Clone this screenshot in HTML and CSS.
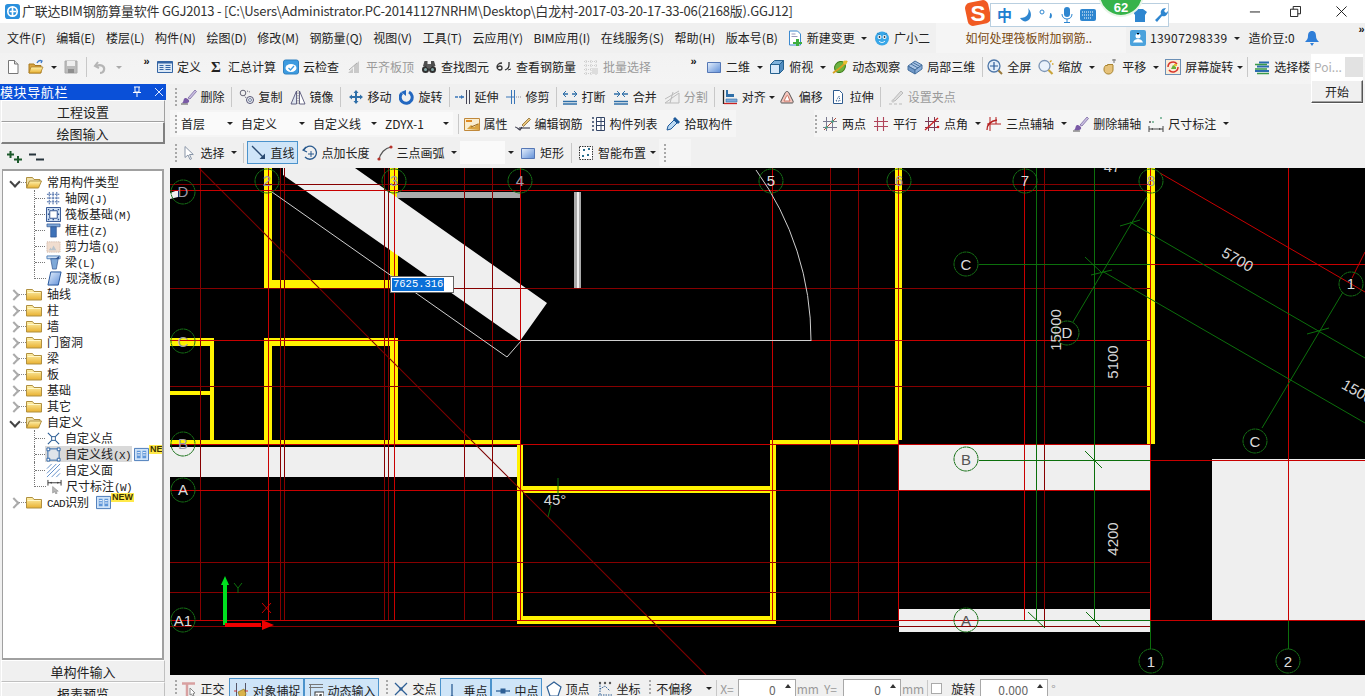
FILE: index.html
```html
<!DOCTYPE html>
<html lang="zh-CN">
<head>
<meta charset="utf-8">
<title>广联达BIM钢筋算量软件 GGJ2013</title>
<link rel="stylesheet" href="styles.css">
</head>
<body>
<svg class="sprite" aria-hidden="true">
<defs>
<linearGradient id="gy" x1="0" y1="0" x2="0" y2="1"><stop offset="0" stop-color="#fff3b0"/><stop offset="1" stop-color="#e8b030"/></linearGradient>
<linearGradient id="gb" x1="0" y1="0" x2="1" y2="1"><stop offset="0" stop-color="#e6f0fc"/><stop offset="1" stop-color="#5f8fd8"/></linearGradient>
<symbol id="new" viewBox="0 0 16 16"><path d="M3.5 1.5h6l3.500 3.500v9.500h-9.500z" fill="#fff" stroke="#777"/><path d="M9.500 1.500v3.500h3.500" fill="#ddd" stroke="#777"/></symbol>
<symbol id="open" viewBox="0 0 16 16"><path d="M1 5h5l1 1.500h6V14H1z" fill="#d9a441" stroke="#a87a20"/><path d="M3 8h12l-2.500 6H1z" fill="url(#gy)" stroke="#a87a20" stroke-width=".7"/><path d="M9 4c1-2 3-3 5-2l-1 2" fill="none" stroke="#3a78c8" stroke-width="1.300"/></symbol>
<symbol id="save" viewBox="0 0 16 16"><path d="M2 2h12v12H2z" fill="#bbb" stroke="#aaa"/><path d="M4 2h8v5H4z" fill="#eee"/><path d="M5 10h6v4H5z" fill="#8f8f8f"/></symbol>
<symbol id="undo" viewBox="0 0 16 16"><path d="M5 3L2 7l4 2" fill="none" stroke="#b5b5b5" stroke-width="2"/><path d="M3 7c5-2 9 0 8 4-.5 2-2 3-4 3" fill="none" stroke="#b5b5b5" stroke-width="2.200"/></symbol>
<symbol id="def" viewBox="0 0 16 16"><path d="M.5 2.500h15v11H.5z" fill="#dbe8f6" stroke="#3465a4"/><path d="M.5 2.500h15v2H.5z" fill="#3465a4"/><path d="M2.500 6.500h4M2.500 8.500h4M2.500 10.500h4M8.500 6.500h5M8.500 8.500h5M8.500 10.500h5" stroke="#3465a4"/></symbol>
<symbol id="cloud" viewBox="0 0 16 16"><rect x=".5" y="1" width="15" height="14" rx="2" fill="#3d9be0" stroke="#2f80c0"/><ellipse cx="8" cy="9" rx="5.500" ry="4" fill="#fff"/><path d="M5.500 9l2 2 3.500-4" fill="none" stroke="#3d9be0" stroke-width="1.300"/></symbol>
<symbol id="flat" viewBox="0 0 16 16"><path d="M2 14l5-5v5zM8 14V7l5-5v12z" fill="#c9c9c9"/><path d="M3 11l8-7" stroke="#aaa"/></symbol>
<symbol id="find" viewBox="0 0 16 16"><path d="M2 7l1.500-5h3v5zM10 7V2h3l1.500 5z" fill="#4d4d4d"/><circle cx="4.500" cy="10.500" r="3.500" fill="#2f2f2f"/><circle cx="11.500" cy="10.500" r="3.500" fill="#2f2f2f"/><circle cx="4.500" cy="10.500" r="1.500" fill="#8aa"/><circle cx="11.500" cy="10.500" r="1.500" fill="#8aa"/><path d="M6 5h4v4H6z" fill="#5a5a5a"/></symbol>
<symbol id="rebar" viewBox="0 0 16 16"><path d="M6 4c-3 0-5 2-5 4s2 3 3 3 2-1 2-2-1-2-2-2-2 .5-2.500 1.500M9 11l2-1c1-.5 2-2 2-4V3" fill="none" stroke="#333" stroke-width="1.300"/><path d="M12 11l3-1" stroke="#333"/></symbol>
<symbol id="batch" viewBox="0 0 16 16"><path d="M1 2.500h14M1 6.500h14M1 10.500h14M1 14.500h14M3 1v15M8 1v15M13 1v15" stroke="#ccc" stroke-dasharray="1 1"/><path d="M9 9h6v6H9z" fill="#ddd"/></symbol>
<symbol id="rect" viewBox="0 0 16 16"><path d="M1.500 3.500h13v10h-13z" fill="url(#gb)" stroke="#5577b5"/></symbol>
<symbol id="cube" viewBox="0 0 16 16"><path d="M1.500 5.500h9v9h-9z" fill="#d8e8f8" stroke="#25608e"/><path d="M1.500 5.500l4-4h9l-4 4z" fill="#7fb2dc" stroke="#25608e"/><path d="M10.500 5.500l4-4v9l-4 4z" fill="#4e8bc0" stroke="#25608e"/></symbol>
<symbol id="orbit" viewBox="0 0 16 16"><ellipse cx="8" cy="8" rx="5" ry="6" transform="rotate(40 8 8)" fill="#6cb33f" stroke="#3c7a1a"/><path d="M1 14C4 12 12 6 15 2" stroke="#d9a020" stroke-width="2" fill="none"/><circle cx="13" cy="3.500" r="2" fill="#e8c030"/></symbol>
<symbol id="loc3" viewBox="0 0 16 16"><path d="M1 7l7-5 7 4-7 5z" fill="#a9c4e4" stroke="#46709e"/><path d="M1 7v4l7 4v-4z" fill="#6f97c7" stroke="#46709e"/><path d="M8 11v4l7-5V6z" fill="#8db0da" stroke="#46709e"/><path d="M4 5l7 4M6 3.500l7 4" stroke="#46709e"/></symbol>
<symbol id="full" viewBox="0 0 16 16"><circle cx="7" cy="7" r="6" fill="#e4eef9" stroke="#4d76a8" stroke-width="1.300"/><path d="M7 3v8M3 7h8" stroke="#2c5c9a" stroke-width="1.200"/><path d="M11.500 11.500l3.500 3.500" stroke="#9a7a3d" stroke-width="2"/></symbol>
<symbol id="zoom" viewBox="0 0 16 16"><circle cx="6.500" cy="7" r="5.500" fill="#eaf2fb" stroke="#7c95b5" stroke-width="1.300"/><path d="M10.500 11l4 4" stroke="#c9a43a" stroke-width="2.200"/><path d="M12 3l1.500-1.500M14 5h1.500" stroke="#d4a520" stroke-width="1.300"/></symbol>
<symbol id="pan" viewBox="0 0 16 16"><path d="M2 10c0-2 1-3 2-4l1 1 1-2 1 1 1-1 1 1 1-1 1 1v5c0 2-2 4-4 4H6c-2 0-4-2-4-4z" fill="#e6c27a" stroke="#a8842f"/><path d="M10 1h4M12 0v4M11 2.500" stroke="#777"/></symbol>
<symbol id="srot" viewBox="0 0 16 16"><rect x=".5" y=".5" width="15" height="15" fill="#f9ecd8" stroke="#6b8fb5"/><path d="M3 8a5 5 0 0 1 9-3M13 8a5 5 0 0 1-9 3" fill="none" stroke="#d9352a" stroke-width="1.500"/><path d="M6 10l2-4 3 2v2z" fill="#68b038"/><path d="M9 5h3v2H9z" fill="#e8c030"/></symbol>
<symbol id="floor" viewBox="0 0 16 16"><path d="M5 3.500h10M3 7.500h12M1 12h14" stroke="#2b6cb0" stroke-width="1.800"/><path d="M1 5.500h12M1 10h12M3 14.500h12" stroke="#3a9a4a" stroke-width="1.300"/></symbol>
<symbol id="brush" viewBox="0 0 16 16"><path d="M7 9l7-8 1.500 1.500L9 10z" fill="#c9bfe0" stroke="#6e5a9a" stroke-width=".7"/><path d="M4 9c2 0 5 2 4 4-1 1.500-5 1.500-7 1 2-1 1-4 3-5z" fill="#7a5aa6"/><path d="M0 15h7" stroke="#555"/></symbol>
<symbol id="copy" viewBox="0 0 16 16"><circle cx="4" cy="4" r="2.800" fill="none" stroke="#667"/><circle cx="11" cy="11" r="3.500" fill="none" stroke="#557"/><circle cx="11" cy="11" r="1.500" fill="none" stroke="#78a"/><path d="M8 2l3 1M7 9l-2-3" stroke="#667" stroke-dasharray="1 1"/></symbol>
<symbol id="mirror" viewBox="0 0 16 16"><path d="M6.500 2v13H1z" fill="#dfe6ef" stroke="#557" stroke-width=".9"/><path d="M9.500 2v13H15z" fill="#fff" stroke="#557" stroke-width=".9"/><path d="M8 1v15" stroke="#888" stroke-dasharray="1.500 1"/></symbol>
<symbol id="move" viewBox="0 0 16 16"><path d="M8 1l2.500 3H9v3h3V5.500L15 8l-3 2.500V9H9v3h1.500L8 15l-2.500-3H7V9H4v1.500L1 8l3-2.500V7h3V4H5.500z" fill="#2f6fa8"/></symbol>
<symbol id="rot" viewBox="0 0 16 16"><path d="M3 4a6 6 0 1 0 7-1" fill="none" stroke="#2267c0" stroke-width="3"/><path d="M7 1v6L2 3z" fill="#2267c0"/></symbol>
<symbol id="ext" viewBox="0 0 16 16"><path d="M0 8h9" stroke="#3a76b8" stroke-width="1.300" stroke-dasharray="3 1"/><path d="M11.500 1v14M14.500 1v14" stroke="#445" /><path d="M6 6l3 2-3 2" fill="#3a76b8"/></symbol>
<symbol id="trim" viewBox="0 0 16 16"><path d="M5.500 1v14M8.500 1v14" stroke="#3a76b8" /><path d="M0 8h8" stroke="#3a76b8"/><path d="M10 8h6" stroke="#889" stroke-dasharray="1 1"/></symbol>
<symbol id="brk" viewBox="0 0 16 16"><path d="M1 12.500h14M1 15h14" stroke="#2f6fa8" stroke-width="1.300"/><path d="M1 5h5M10 5h5" stroke="#2f6fa8" stroke-width="1.300"/><path d="M4 2L1 5l3 3M12 2l3 3-3 3" fill="none" stroke="#2f6fa8"/></symbol>
<symbol id="mrg" viewBox="0 0 16 16"><path d="M1 12.500h14M1 15h14" stroke="#2f6fa8" stroke-width="1.300"/><path d="M1 5h5M10 5h5" stroke="#2f6fa8" stroke-width="1.300"/><path d="M4 2l3 3-3 3M12 2L9 5l3 3" fill="none" stroke="#2f6fa8"/></symbol>
<symbol id="split" viewBox="0 0 16 16"><path d="M1 14h14V4z" fill="#eee" stroke="#bbb"/><path d="M1 10l14-8M6 14l3-11" stroke="#bbb"/></symbol>
<symbol id="algn" viewBox="0 0 16 16"><path d="M1.500 1v14" stroke="#222" stroke-width="1.300"/><path d="M2 14.500h13" stroke="#c22" stroke-width="1.300"/><path d="M4 5h8v3H4z" fill="#2f6fa8"/><path d="M4 10h11v3H4z" fill="#7ea8d8" stroke="#2f6fa8" stroke-width=".6"/><path d="M5 1v4" stroke="#2f6fa8" stroke-width="2"/></symbol>
<symbol id="offs" viewBox="0 0 16 16"><path d="M2 12l4-8c1-2 3-2 4 0l4 8c.5 1.500 0 2-1 2H3c-1 0-1.500-.5-1-2z" fill="#f6c8c0" stroke="#555"/><path d="M5 12l2.500-5c.5-1 1-1 1.500 0l2 5z" fill="#fff" stroke="#c76"/></symbol>
<symbol id="strh" viewBox="0 0 16 16"><path d="M3.500 1.500h6l3 3v10h-9z" fill="#fff" stroke="#2d5a8e"/><path d="M6 12l3-5 1 5z" fill="none" stroke="#2d5a8e" stroke-dasharray="1 1"/></symbol>
<symbol id="grp" viewBox="0 0 16 16"><path d="M5 11l8-9 2 2-8 8z" fill="#ddd" stroke="#bbb"/><path d="M1 15h3M6 15h3M11 15h3" stroke="#bbb"/><path d="M3 12l2-2 2 2-2 2z" fill="#ccc"/></symbol>
<symbol id="prop" viewBox="0 0 16 16"><path d="M.5 2.500h15v12H.5z" fill="#f9edd0" stroke="#c0883a"/><path d="M2 5h6" stroke="#e08a20" stroke-width="2"/><path d="M3 13l4-4 3 2 5-4v7z" fill="#d9a441"/><path d="M7 11l7-3" stroke="#9a6a20"/></symbol>
<symbol id="edit" viewBox="0 0 16 16"><path d="M0 11c2 0 3 2 5 3l2-3" fill="none" stroke="#445" stroke-width="1.200"/><path d="M7 9l7-7 1.500 1.500L8.500 10.500z" fill="#e8c47a" stroke="#8a6a30" stroke-width=".8"/><path d="M4 12h11" stroke="#223"/></symbol>
<symbol id="list" viewBox="0 0 16 16"><path d="M2 2h2M2 6h2M2 10h2M2 14h2" stroke="#346" stroke-width="1.500"/><path d="M6.500 1.500h8v13h-8zM6.500 5.500h8M6.500 9.500h8" fill="#fff" stroke="#346"/><path d="M11 1.500v13" stroke="#346"/></symbol>
<symbol id="pick" viewBox="0 0 16 16"><path d="M2 14l1-4 6-6 3 3-6 6z" fill="#bcd9f2" stroke="#1e5a9a"/><path d="M8 3l2-2 5 5-2 2z" fill="#1e5a9a"/></symbol>
<symbol id="two" viewBox="0 0 16 16"><path d="M4.500 1v14M10.500 1v14M1 5.500h14M1 11.500h14" stroke="#7a7a90"/><path d="M2 14L14 2" stroke="#b04a3a"/><circle cx="4.500" cy="11.500" r="1.200" fill="#4a8"/><circle cx="10.500" cy="5.500" r="1.200" fill="#4a8"/></symbol>
<symbol id="para" viewBox="0 0 16 16"><path d="M4.500 1v14M10.500 1v14M1 5.500h14M1 10.500h14" stroke="#b0455a" stroke-width="1.100"/></symbol>
<symbol id="ang" viewBox="0 0 16 16"><path d="M4.500 1v14M10.500 1v14M1 5.500h14M1 11.500h14" stroke="#7a3a55"/><path d="M1 14L14 2" stroke="#c22" stroke-width="1.300"/><circle cx="14" cy="11" r="1.300" fill="#c22"/></symbol>
<symbol id="tri" viewBox="0 0 16 16"><path d="M1 14c0-6 4-9 10-10" fill="none" stroke="#b62020" stroke-width="1.300"/><path d="M4 1v14M1 8h14M10 1v7" stroke="#b62020"/></symbol>
<symbol id="dim" viewBox="0 0 16 16"><path d="M1 10v6M15 10v6M1 13h14" stroke="#444"/><path d="M3 13l2-1v2zM13 13l-2-1v2z" fill="#444"/><circle cx="5" cy="6" r="1" fill="#6a8"/><circle cx="13" cy="2" r="1" fill="#6a8"/><circle cx="2" cy="6" r="1" fill="#555"/></symbol>
<symbol id="sel" viewBox="0 0 16 16"><path d="M4 1.500v11l3-2.500 2 4.500 1.500-.7-2-4.300h3.800z" fill="#fff" stroke="#8a96a8"/></symbol>
<symbol id="line" viewBox="0 0 16 16"><path d="M1 1l12 12" stroke="#2a4a70" stroke-width="1.300"/><path d="M14 14V8.500L8.500 14z" fill="#2a4a70"/></symbol>
<symbol id="plen" viewBox="0 0 16 16"><path d="M4 2L1 5l4 2" fill="none" stroke="#2a5a8e" stroke-width="1.200"/><path d="M2 5a6.500 6.500 0 1 1 1 7" fill="none" stroke="#2a5a8e" stroke-width="1.300"/><path d="M9 6v6M6 9h6" stroke="#2a5a8e"/></symbol>
<symbol id="arc3" viewBox="0 0 16 16"><path d="M2 15C3 8 8 3 14 2" fill="none" stroke="#555" stroke-width="1.200"/><circle cx="2" cy="14" r="1.600" fill="#b5322a"/><circle cx="14" cy="2" r="1.600" fill="#b5322a"/></symbol>
<symbol id="smart" viewBox="0 0 16 16"><path d="M1.500 1.500h13v13h-13z" fill="#fff" stroke="#333" stroke-dasharray="1.500 1"/><path d="M5 4h2v2H5zM10 3h2v2h-2zM9 9h2v2H9zM4 10h2v2H4z" fill="#2a6f8e"/></symbol>
<symbol id="ortho" viewBox="0 0 16 16"><path d="M1 2.500h13M6 3v12" stroke="#d8a0a0" stroke-width="2.500"/><path d="M9 7l5 5-2 .5 1 2-1.500.5-1-2-1.500 1z" fill="#fff" stroke="#888"/></symbol>
<symbol id="snap" viewBox="0 0 16 16"><path d="M3.500 0v16M12.500 0v16" stroke="#556"/><path d="M1 8h3M11 8h4" stroke="#c33"/><path d="M5 9l6-3 2 5-2 4H7z" fill="#d9b24a" stroke="#967a20" stroke-width=".7"/></symbol>
<symbol id="dyn" viewBox="0 0 16 16"><path d="M1 1.500h14M1 4.500h14M2.500 1v15" stroke="#777"/><rect x="7" y="9" width="9" height="7" fill="#fff" stroke="#333"/><path d="M9 11v3.500M11.500 11.500h2v1h-2v2h2" stroke="#222" fill="none" stroke-width=".8"/></symbol>
<symbol id="cross" viewBox="0 0 16 16"><path d="M2 2l12 12M14 2L2 14" stroke="#2e5f95" stroke-width="1.300"/><path d="M6.500 6.500h3v3h-3z" fill="#2e5f95"/></symbol>
<symbol id="perp" viewBox="0 0 16 16"><path d="M8 1v13M1 14.500h14" stroke="#2e5f95" stroke-width="1.300"/><circle cx="8" cy="14" r="1.800" fill="#2e5f95"/></symbol>
<symbol id="mid" viewBox="0 0 16 16"><path d="M1 8h14" stroke="#2e5f95" stroke-width="1.300"/><path d="M5.500 5.500h5v5h-5z" fill="#2e5f95"/></symbol>
<symbol id="vert" viewBox="0 0 16 16"><path d="M8 1l7 5-3 9H4L1 6z" fill="#fff" stroke="#2e5f95" stroke-width="1.200"/></symbol>
<symbol id="coord" viewBox="0 0 16 16"><path d="M3 2v12M1 14h14M3 8l5-3 5 5" fill="none" stroke="#2e5f95" stroke-dasharray="1.500 1"/><circle cx="8" cy="2" r="1.200" fill="#555"/><circle cx="13" cy="2" r="1.200" fill="#555"/><circle cx="3" cy="2" r="1.200" fill="#555"/></symbol>
<symbol id="newv" viewBox="0 0 16 16"><path d="M2.500 1h8l3 3v11h-11z" fill="#fff" stroke="#3c8ad0"/><path d="M9 9h3v3h3v2h-3v2H9v-2H6v-2h3z" fill="#3fae3f"/><path d="M4.500 4h4M4.500 6.500h6" stroke="#99b"/></symbol>
<symbol id="xer" viewBox="0 0 16 16"><circle cx="8" cy="8.500" r="7" fill="#39a7e8"/><circle cx="5.500" cy="7" r="2" fill="#fff"/><circle cx="10.500" cy="7" r="2" fill="#fff"/><circle cx="5.500" cy="7" r=".9" fill="#234"/><circle cx="10.500" cy="7" r=".9" fill="#234"/><path d="M5 11c2 2 4 2 6 0" stroke="#fff" fill="none"/><path d="M3 3l3 2M13 3l-3 2" stroke="#2c85c0"/></symbol>
<symbol id="usr" viewBox="0 0 16 16"><rect width="16" height="16" rx="2" fill="#4ba2dc"/><circle cx="8" cy="6" r="2.500" fill="#fff"/><path d="M3 12.500c1-3 3-3.500 5-3.500s4 .5 5 3.500z" fill="#fff"/><path d="M6 3l2 2 2-2" stroke="#4ba2dc"/></symbol>
<symbol id="bell" viewBox="0 0 16 16"><path d="M8 1c3 0 4 2.500 4 5s1 4 3 6H1c2-2 3-3.500 3-6s1-5 4-5z" fill="#2f7ed8"/><path d="M6 13h4l-2 3z" fill="#2f7ed8"/></symbol>
<symbol id="f" viewBox="0 0 16 14"><path d="M.5 2.500h6l1.500 2h7.500v8.500H.5z" fill="url(#gy)" stroke="#b09040"/><path d="M1.500 5.500h13" stroke="#fff7c8"/></symbol>
<symbol id="fo" viewBox="0 0 16 14"><path d="M.5 2.500h6l1.500 2h6v2H3.500L.5 12.500z" fill="#efe0a8" stroke="#b09040"/><path d="M3.500 6h12l-3 7H.5z" fill="url(#gy)" stroke="#b09040"/></symbol>
<symbol id="grid" viewBox="0 0 16 16"><path d="M1 3.500h14M1 7.500h14M1 11.500h14M3.500 1v14M7.500 1v14M11.500 1v14" stroke="#3a5fa0" stroke-dasharray="2 .8"/></symbol>
<symbol id="raft" viewBox="0 0 16 16"><path d="M.5.500h15v15H.5z" fill="#cfe0f4" stroke="#2c4f8e"/><path d="M4 4h8v8H4z" fill="#fff" stroke="#2c4f8e"/><path d="M2 2h1.500v1.500H2zM7 2h1.500v1.500H7zM12.500 2H14v1.500h-1.500zM2 7h1.500v1.500H2zM12.500 7H14v1.500h-1.500zM2 12.500h1.500V14H2zM7 12.500h1.500V14H7zM12.500 12.500H14V14h-1.500z" fill="#2c4f8e"/></symbol>
<symbol id="col" viewBox="0 0 16 16"><path d="M1 1h14v3H1z" fill="#7ea8d8" stroke="#2c4f8e" stroke-width=".7"/><path d="M5 4h6v11H5z" fill="#3e72b8" stroke="#2c4f8e" stroke-width=".7"/></symbol>
<symbol id="wall" viewBox="0 0 16 16"><path d="M1 3h14v11H1z" fill="#f0ddcf" stroke="#c9b0a0" stroke-dasharray="1 1"/><path d="M3 12l2-3 1 2 2-4 3 5z" fill="#b9c4cc"/></symbol>
<symbol id="beam" viewBox="0 0 16 16"><path d="M1 1h14v3H1z" fill="#cfe0f4" stroke="#4f7fb8"/><path d="M5 4h8l-2 11H7z" fill="#7ea8d8" stroke="#2c4f8e" stroke-width=".7"/><path d="M10 4l4-3v3z" fill="#2c4f8e"/></symbol>
<symbol id="slab" viewBox="0 0 16 16"><path d="M4 1h11l-3 14H1z" fill="url(#gb)" stroke="#1e4f96"/></symbol>
<symbol id="cpt" viewBox="0 0 16 16"><path d="M2 2l12 12M14 2L2 14" stroke="#2e5f95" stroke-width="1.200"/><path d="M6 6h4v4H6z" fill="#fff" stroke="#2e5f95"/></symbol>
<symbol id="cln" viewBox="0 0 16 16"><path d="M2 2h12v12H2z" fill="#dfe4ea" stroke="#2c64a8"/><path d="M1 1h3v3H1zM12 1h3v3h-3zM1 12h3v3H1zM12 12h3v3h-3z" fill="#fff" stroke="#2c64a8"/></symbol>
<symbol id="cfc" viewBox="0 0 16 16"><path d="M1 6l5-5M1 11L11 1M1 15L15 1M6 15l9-9M11 15l4-4" stroke="#5d8cc8"/></symbol>
<symbol id="cdm" viewBox="0 0 16 16"><path d="M1 1v6M15 1v6M1 4h14" stroke="#333"/><path d="M3 4l2-1v2zM13 4l-2-1v2z" fill="#333"/><path d="M6 8v7l2-1.500 1.500 2.500 1.300-.7L9.500 13H12z" fill="#b9b9b9" stroke="#888" stroke-width=".6"/></symbol>
<symbol id="bk" viewBox="0 0 16 16"><path d="M.5 1.500h15v13H.5z" fill="#cfe3f8" stroke="#4578b8"/><path d="M3 4h4v8H3zM9 4h4v8H9z" fill="#5d95d8"/><path d="M3.500 6h3M3.500 8.500h3M9.500 6h3M9.500 8.500h3" stroke="#fff"/></symbol>
</defs>
</svg>

<div class="app">
  <header class="titlebar">
    <svg class="apicon" viewBox="0 0 16 16"><rect width="16" height="16" rx="3" fill="#2a8fdc"/><circle cx="8" cy="8" r="5" fill="none" stroke="#fff" stroke-width="1.800"/><path d="M8 3v10M5 8h7" stroke="#fff" stroke-width="1.800"/></svg>
    <span class="wintitle">广联达BIM钢筋算量软件 GGJ2013 - [C:\Users\Administrator.PC-20141127NRHM\Desktop\白龙村-2017-03-20-17-33-06(2168版).GGJ12]</span>
    <div class="winbtns">
      <svg viewBox="0 0 12 12"><path d="M1 6.500h11" stroke="#111"/></svg>
      <svg viewBox="0 0 12 12"><path d="M.5 3.500h8v8h-8zM3.500 3.500v-3h8v8h-3" fill="none" stroke="#111"/></svg>
      <svg viewBox="0 0 12 12"><path d="M.5.500l11 11M11.500.500l-11 11" stroke="#111"/></svg>
    </div>
  </header>

  <nav class="menubar">
    <span class="mi">文件(F)</span><span class="mi">编辑(E)</span><span class="mi">楼层(L)</span><span class="mi">构件(N)</span><span class="mi">绘图(D)</span><span class="mi">修改(M)</span><span class="mi">钢筋量(Q)</span><span class="mi">视图(V)</span><span class="mi">工具(T)</span><span class="mi">云应用(Y)</span><span class="mi">BIM应用(I)</span><span class="mi">在线服务(S)</span><span class="mi">帮助(H)</span><span class="mi">版本号(B)</span>
    <span class="t nb"><svg class="i"><use href="#newv"/></svg><span>新建变更</span></span><i class="c r3"></i>
    <span class="t"><svg class="i"><use href="#xer"/></svg><span>广小二</span></span>
    <div class="notice"><span class="link">如何处理筏板附加钢筋..</span></div>
    <span class="t"><svg class="i"><use href="#usr"/></svg><span class="phone">13907298339</span></span><i class="c"></i>
    <span class="beans">造价豆:0</span>
    <svg class="i bell"><use href="#bell"/></svg>
    <span class="more menumore">»</span>
  </nav>

  <div class="tb row1">
    <span class="t"><svg class="i"><use href="#new"/></svg></span>
    <span class="t"><svg class="i"><use href="#open"/></svg></span><i class="c r3"></i>
    <span class="t"><svg class="i"><use href="#save"/></svg></span><b class="sep"></b>
    <span class="t"><svg class="i"><use href="#undo"/></svg></span><i class="c off r3"></i>
    <span class="more m1">»</span>
    <span class="t"><svg class="i"><use href="#def"/></svg><span>定义</span></span>
    <span class="t"><span class="i sigma">Σ</span><span>汇总计算</span></span>
    <span class="t"><svg class="i"><use href="#cloud"/></svg><span>云检查</span></span>
    <span class="t off"><svg class="i"><use href="#flat"/></svg><span>平齐板顶</span></span>
    <span class="t"><svg class="i"><use href="#find"/></svg><span>查找图元</span></span>
    <span class="t"><svg class="i"><use href="#rebar"/></svg><span>查看钢筋量</span></span>
    <span class="t off"><svg class="i"><use href="#batch"/></svg><span>批量选择</span></span>
    <span class="more m2">»</span>
    <span class="t m3"><svg class="i"><use href="#rect"/></svg><span>二维</span></span><i class="c r3"></i>
    <span class="t"><svg class="i"><use href="#cube"/></svg><span>俯视</span></span><i class="c r3"></i>
    <span class="t"><svg class="i"><use href="#orbit"/></svg><span>动态观察</span></span>
    <span class="t"><svg class="i"><use href="#loc3"/></svg><span>局部三维</span></span><b class="sep n"></b>
    <span class="t"><svg class="i"><use href="#full"/></svg><span>全屏</span></span>
    <span class="t"><svg class="i"><use href="#zoom"/></svg><span>缩放</span></span><i class="c"></i>
    <span class="t m4"><svg class="i"><use href="#pan"/></svg><span>平移</span></span><i class="c r3"></i>
    <span class="t"><svg class="i"><use href="#srot"/></svg><span>屏幕旋转</span></span><i class="c tight"></i><b class="sep wide"></b>
    <span class="t"><svg class="i"><use href="#floor"/></svg><span>选择楼</span></span>
  </div>

  <div class="popup">
    <div class="pophead"><span>Poi...</span><i class="popx"></i></div>
    <button class="popbtn">开始</button>
  </div>

  <div class="ime">
    <svg class="sogou" viewBox="0 0 28 28"><rect x="3" y="3" width="22" height="22" rx="5" transform="rotate(-12 14 14)" fill="#f15a22"/><text x="14" y="21.500" text-anchor="middle" class="sogou-s">S</text></svg>
    <div class="imebar">
      <span class="imezh">中</span>
      <svg viewBox="0 0 16 16"><path d="M11 1c2 5-1 10-8 10 2 3 5 4 7 3 4-1 6-8 1-13z" fill="#2e86d0"/></svg>
      <svg viewBox="0 0 16 16"><circle cx="4" cy="5" r="2" fill="none" stroke="#2e86d0"/><path d="M12 7c1 0 1.500 2 0 4" stroke="#2e86d0" stroke-width="2" fill="none"/></svg>
      <svg viewBox="0 0 16 16"><rect x="5" y="0" width="6" height="10" rx="3" fill="#2e86d0"/><path d="M3 7c0 3 2 5 5 5s5-2 5-5M8 12v3M5 15.500h6" fill="none" stroke="#2e86d0"/></svg>
      <svg viewBox="0 0 16 16"><rect y="2" width="16" height="12" rx="2" fill="#2e86d0"/><path d="M2 5h12M2 8h12M4 11h8" stroke="#fff" stroke-dasharray="1 1"/></svg>
      <span class="imegap"></span>
      <svg viewBox="0 0 16 16"><path d="M1 5l4-3h6l4 3-2 3v7H3V8z" fill="#2e86d0"/></svg>
      <svg viewBox="0 0 16 16"><path d="M2 13l6-6c-1-3 1-6 5-6l-2 3 2 2 2-2c0 4-3 6-6 5l-5 6z" fill="#2e86d0"/></svg>
    </div>
    <div class="score">62</div>
  </div>

  <div class="main">
    <aside class="side">
      <div class="dockhead"><span>模块导航栏</span>
        <svg viewBox="0 0 12 12"><path d="M3 1h6M4 1v5h4V1M2 6.500h8M6 7v4" stroke="#fff" fill="none"/></svg>
        <svg viewBox="0 0 12 12"><path d="M2 2l8 8M10 2l-8 8" stroke="#dce8ff"/></svg>
      </div>
      <div class="sbtn">工程设置</div>
      <div class="sbtn act">绘图输入</div>
      <div class="treetools">
        <svg viewBox="0 0 16 12"><path d="M0 3.500h7M3.500 0v7M7 8.500h8M11 5v8" stroke="#1d5a2c" stroke-width="2"/></svg>
        <svg viewBox="0 0 16 12"><path d="M0 3.500h7M7 8.500h8" stroke="#27343d" stroke-width="2"/></svg>
      </div>
      <div class="tree">
        <div class="row"><i class="chev open"></i><u class="dash"></u><svg class="fold"><use href="#fo"/></svg><span>常用构件类型</span></div>
        <div class="kid"><svg class="ki"><use href="#grid"/></svg><span>轴网<span class="lat">(J)</span></span></div>
        <div class="kid"><svg class="ki"><use href="#raft"/></svg><span>筏板基础<span class="lat">(M)</span></span></div>
        <div class="kid"><svg class="ki"><use href="#col"/></svg><span>框柱<span class="lat">(Z)</span></span></div>
        <div class="kid"><svg class="ki"><use href="#wall"/></svg><span>剪力墙<span class="lat">(Q)</span></span></div>
        <div class="kid"><svg class="ki"><use href="#beam"/></svg><span>梁<span class="lat">(L)</span></span></div>
        <div class="kid last"><svg class="ki"><use href="#slab"/></svg><span>现浇板<span class="lat">(B)</span></span></div>
        <div class="row"><i class="chev"></i><u class="dash"></u><svg class="fold"><use href="#f"/></svg><span>轴线</span></div>
        <div class="row"><i class="chev"></i><u class="dash"></u><svg class="fold"><use href="#f"/></svg><span>柱</span></div>
        <div class="row"><i class="chev"></i><u class="dash"></u><svg class="fold"><use href="#f"/></svg><span>墙</span></div>
        <div class="row"><i class="chev"></i><u class="dash"></u><svg class="fold"><use href="#f"/></svg><span>门窗洞</span></div>
        <div class="row"><i class="chev"></i><u class="dash"></u><svg class="fold"><use href="#f"/></svg><span>梁</span></div>
        <div class="row"><i class="chev"></i><u class="dash"></u><svg class="fold"><use href="#f"/></svg><span>板</span></div>
        <div class="row"><i class="chev"></i><u class="dash"></u><svg class="fold"><use href="#f"/></svg><span>基础</span></div>
        <div class="row"><i class="chev"></i><u class="dash"></u><svg class="fold"><use href="#f"/></svg><span>其它</span></div>
        <div class="row"><i class="chev open"></i><u class="dash"></u><svg class="fold"><use href="#fo"/></svg><span>自定义</span></div>
        <div class="kid"><svg class="ki"><use href="#cpt"/></svg><span>自定义点</span></div>
        <div class="kid"><span class="hl"><svg class="ki"><use href="#cln"/></svg><span>自定义线<span class="lat">(X)</span></span></span><svg class="bk"><use href="#bk"/></svg><em class="nw">NE</em></div>
        <div class="kid"><svg class="ki"><use href="#cfc"/></svg><span>自定义面</span></div>
        <div class="kid last"><svg class="ki"><use href="#cdm"/></svg><span>尺寸标注<span class="lat">(W)</span></span></div>
        <div class="row"><i class="chev"></i><u class="dash"></u><svg class="fold"><use href="#f"/></svg><span><span class="lat">CAD</span>识别</span><svg class="bk cadbk"><use href="#bk"/></svg><em class="nw">NEW</em></div>
      </div>
      <div class="sbtn bot">单构件输入</div>
      <div class="sbtn bot">报表预览</div>
    </aside>

    <section class="work">
      <div class="tb row2">
        <i class="grip"></i>
        <span class="t"><svg class="i"><use href="#brush"/></svg><span>删除</span></span><b class="sep"></b>
        <span class="t"><svg class="i"><use href="#copy"/></svg><span>复制</span></span>
        <span class="t"><svg class="i"><use href="#mirror"/></svg><span>镜像</span></span><b class="sep"></b>
        <span class="t"><svg class="i"><use href="#move"/></svg><span>移动</span></span>
        <span class="t"><svg class="i"><use href="#rot"/></svg><span>旋转</span></span><b class="sep n"></b>
        <span class="t"><svg class="i"><use href="#ext"/></svg><span>延伸</span></span>
        <span class="t"><svg class="i"><use href="#trim"/></svg><span>修剪</span></span><b class="sep n"></b>
        <span class="t"><svg class="i"><use href="#brk"/></svg><span>打断</span></span>
        <span class="t"><svg class="i"><use href="#mrg"/></svg><span>合并</span></span>
        <span class="t off"><svg class="i"><use href="#split"/></svg><span>分割</span></span><b class="sep"></b>
        <span class="t"><svg class="i"><use href="#algn"/></svg><span>对齐</span></span><i class="c tight"></i>
        <span class="t"><svg class="i"><use href="#offs"/></svg><span>偏移</span></span>
        <span class="t"><svg class="i"><use href="#strh"/></svg><span>拉伸</span></span><b class="sep"></b>
        <span class="t off"><svg class="i"><use href="#grp"/></svg><span>设置夹点</span></span>
      </div>

      <div class="tb row3">
        <div class="bar">
          <i class="grip"></i>
          <span class="combo w1"><span>首层</span><i class="c tight"></i></span>
          <span class="combo w2"><span>自定义</span><i class="c tight"></i></span>
          <span class="combo w2"><span>自定义线</span><i class="c tight"></i></span>
          <span class="combo w2 ls"><span>ZDYX-1</span><i class="c tight"></i></span>
          <b class="sep n"></b>
          <span class="t"><svg class="i"><use href="#prop"/></svg><span>属性</span></span>
          <span class="t"><svg class="i"><use href="#edit"/></svg><span>编辑钢筋</span></span>
          <span class="t"><svg class="i"><use href="#list"/></svg><span>构件列表</span></span>
          <span class="t"><svg class="i"><use href="#pick"/></svg><span>拾取构件</span></span>
        </div>
        <div class="bar second">
          <i class="grip"></i>
          <span class="t"><svg class="i"><use href="#two"/></svg><span>两点</span></span>
          <span class="t"><svg class="i"><use href="#para"/></svg><span>平行</span></span>
          <span class="t"><svg class="i"><use href="#ang"/></svg><span>点角</span></span><i class="c r2"></i>
          <span class="t"><svg class="i"><use href="#tri"/></svg><span>三点辅轴</span></span><i class="c r3"></i>
          <span class="t"><svg class="i"><use href="#brush"/></svg><span>删除辅轴</span></span>
          <span class="t"><svg class="i"><use href="#dim"/></svg><span>尺寸标注</span></span><i class="c"></i>
        </div>
      </div>

      <div class="tb row4">
        <i class="grip"></i>
        <span class="t"><svg class="i"><use href="#sel"/></svg><span>选择</span></span><i class="c r3"></i><b class="sep"></b>
        <span class="t on"><svg class="i"><use href="#line"/></svg><span>直线</span></span>
        <span class="t"><svg class="i"><use href="#plen"/></svg><span>点加长度</span></span>
        <span class="t"><svg class="i"><use href="#arc3"/></svg><span>三点画弧</span></span><i class="c"></i>
        <span class="blank"></span><i class="c r3"></i>
        <span class="t"><svg class="i"><use href="#rect"/></svg><span>矩形</span></span><b class="sep"></b>
        <span class="t"><svg class="i"><use href="#smart"/></svg><span>智能布置</span></span><i class="c tight"></i>
        <span class="endbar"><i class="grip"></i></span>
      </div>

      <div class="canvas">
        <svg class="cad" viewBox="170 168 1195 507">
          <path class="yel" d="M264 168h8v112h118v-112h8v120H264zM264 338h134v105h-8V346H272v97h-8zM170 338h44v102h-4V346h-40zM170 391h42v4h-42zM170 440h351v5H170zM517 477h6v139h247V493H523v-7h253v138H517zM770 440h129v5H776v41h-6zM895 168h7v272h-7zM1147 168h8v276h-8z"/>
          <path class="wht" d="M283 168h72L547 303 520 341 283 175zM170 447h350v30H170zM899 444h251v46H899zM899 609h251v23H899zM1212 459h153v161h-153z"/>
          <path class="yel" d="M517 445h6v32h-6zM390 253l8 6v29h-8z"/>
          <path class="gry" d="M397 192h124v6H397zM574 192h7v96h-7z"/>
          <path class="wht" d="M577 192h2v96h-2zM170 193l8-3v7l-8 2z"/>
          <path class="dark" d="M170 184.500h980M170 288.500h980M170 386.500h980M170 562.500h980M170 592.500h980M170 626.500h980M200.500 168v453M280.500 168v453M284.500 168v453M384.500 168v453M388.500 168v453M464.500 168v453M492.500 168v453M830.500 168v453M858.500 168v453M1044.500 168v459"/>
          <path class="diag" d="M199 168L706 675"/>
          <path class="red" d="M170 190.500h980M170 340.500h980M170 444.500h980M170 490.500h980M170 620.500h1195M1150 264.500h215M1150 460.500h215M268.500 168v453M394.500 168v453M520.500 168v453M772.500 168v453M898.500 168v453M1024.500 168v453M1150.500 168v453M1288.500 168v453M1160 173L1365 292M1352 278l13-26"/>
          <path class="wline" d="M272 192L507 357M521 340.500H811M811 341A290 290 0 0 0 756 170M521 341l-14 16"/>
          <path class="grn" d="M979 264.500h171M979 460.500h171M979 620.500h171M1036.500 168v452M1094.500 168v452M1150.500 621v28M1288.500 621v28M1073 322L1147 197M1262 428L1343 292M1130 222L1365 358M1102 271L1365 423M1085 257l16 15M1120 226l20-6M1091 275l21-5M1307 334l22-6M1085 451l17 17M1028 612l17 16M1086 612l15 15M558 478v22M548 517l3-12"/>
          <g class="rings">
            <circle cx="183" cy="192" r="12"/><circle cx="267" cy="181" r="12"/><circle cx="394" cy="181" r="12"/><circle cx="520" cy="181" r="12"/><circle cx="771" cy="181" r="12"/><circle cx="899" cy="181" r="12"/><circle cx="1025" cy="181" r="12"/><circle cx="1151" cy="181" r="12"/><circle cx="183" cy="341" r="12"/><circle cx="183" cy="444" r="12"/><circle cx="183" cy="490" r="12"/><circle cx="183" cy="620" r="12"/><circle cx="966" cy="264" r="12"/><circle cx="1067" cy="333" r="12"/><circle cx="966" cy="459" r="12"/><circle cx="966" cy="620" r="12"/><circle cx="1151" cy="661" r="12"/><circle cx="1288" cy="661" r="12"/><circle cx="1255" cy="441" r="12"/><circle cx="1351" cy="284" r="12"/>
          </g>
          <g class="lbl">
            <text x="183" y="197" class="dim">D</text><text x="183" y="347" class="dim">C</text><text x="183" y="449" class="dim">B</text>
            <text x="183" y="495">A</text><text x="183" y="626">A1</text>
            <text x="267" y="186" class="dim">2</text><text x="394" y="186" class="dim">3</text><text x="520" y="186" class="dim">4</text><text x="771" y="186">5</text><text x="899" y="186" class="dim">6</text><text x="1025" y="186">7</text><text x="1151" y="186" class="dim">8</text>
            <text x="966" y="270">C</text><text x="1067" y="338">D</text><text x="966" y="465" class="ink">B</text><text x="966" y="626" class="ink">A</text><text x="1255" y="447">C</text><text x="1351" y="289">1</text><text x="1151" y="667">1</text><text x="1288" y="667">2</text>
          </g>
          <g class="dimtxt">
            <text transform="translate(1235 264) rotate(30)">5700</text>
            <text transform="translate(1355 396) rotate(30)">1500</text>
            <text transform="translate(1061 330) rotate(-90)">15000</text>
            <text transform="translate(1118 362) rotate(-90)">5100</text>
            <text transform="translate(1118 539) rotate(-90)">4200</text>
            <text x="1112" y="172">47</text>
            <text x="555" y="505">45°</text>
          </g>
          <path class="axy" d="M225 625v-42"/><path class="axyh" d="M221 585l4-9 4 9z"/>
          <path class="axx" d="M225 625h36"/><path class="axxh" d="M262 620l12 5-12 5z"/>
          <path class="grn" d="M234 583l4 5 4-5M238 588v5"/>
          <path class="red" d="M262 603l9 10M271 603l-9 10"/>
        </svg>
        <div class="dimin"><span>7625.316</span></div>
      </div>

      <div class="tb status">
        <i class="grip"></i>
        <span class="t"><svg class="i"><use href="#ortho"/></svg><span>正交</span></span>
        <span class="t on s1"><svg class="i"><use href="#snap"/></svg><span>对象捕捉</span></span>
        <span class="t on"><svg class="i"><use href="#dyn"/></svg><span>动态输入</span></span>
        <i class="grip g7"></i>
        <span class="t"><svg class="i"><use href="#cross"/></svg><span>交点</span></span>
        <span class="t on"><svg class="i"><use href="#perp"/></svg><span>垂点</span></span>
        <span class="t on"><svg class="i"><use href="#mid"/></svg><span>中点</span></span>
        <span class="t"><svg class="i"><use href="#vert"/></svg><span>顶点</span></span>
        <span class="t"><svg class="i"><use href="#coord"/></svg><span>坐标</span></span>
        <i class="grip g5"></i>
        <span class="combo w3"><span>不偏移</span><i class="c tight"></i></span>
        <b class="sep n z"></b>
        <span class="lb off">X=</span>
        <span class="num"><span>0</span><i class="spin"></i></span><span class="lb off un">mm</span>
        <span class="lb off yl">Y=</span>
        <span class="num"><span>0</span><i class="spin"></i></span><span class="lb off un">mm</span>
        <b class="sep n"></b><i class="check"></i>
        <span class="lb rot">旋转</span>
        <span class="num wide"><span>0.000</span><i class="spin"></i></span><span class="lb off deg">°</span>
      </div>
    </section>
  </div>
</div>
</body>
</html>
```
FILE: styles.css
```css
*{box-sizing:border-box}
html,body{margin:0;height:100%;overflow:hidden}
body{font:12px/16px "Noto Sans CJK SC","Liberation Sans",sans-serif;color:#222;background:#f0f0f0}
.sprite{width:0;height:0;display:block;overflow:hidden}
.app{position:relative;width:1365px;height:696px;overflow:hidden;display:flex;flex-direction:column;background:#f0f0f0}

.titlebar{height:23px;flex:none;background:#fff;display:flex;align-items:center;padding:0 0 1px 5px}
.apicon{width:15px;height:15px;flex:none}
.wintitle{margin-left:2px;font-size:13px;color:#333;white-space:nowrap;letter-spacing:-.21px}
.winbtns{margin-left:auto;display:flex;gap:30px;margin-right:18px}
.winbtns svg{width:11px;height:11px;display:block}
.winbtns svg+svg+svg{margin-left:5px}

.menubar{height:30px;flex:none;display:flex;align-items:center;padding-left:7px;white-space:nowrap;position:relative}
.mi{margin-right:10.500px;color:#222;flex:none}
.nb{margin-left:-5px}
.notice{flex:none;width:190px;margin-left:3px;height:30px;background:#f5f5f5;display:flex;align-items:center;padding-left:29px}
.link{color:#7a4a12}
.phone{letter-spacing:.4px}
.beans{margin-left:8.500px;flex:none}
.bell{margin-left:9px}
.more{font:700 11px/10px "Liberation Sans",sans-serif;align-self:flex-start;color:#111;width:10px;flex:none}
.menumore{margin:1px 0 0 39px}

.tb{display:flex;align-items:center;white-space:nowrap}
.t{display:inline-flex;align-items:center;gap:4px;padding:0 3.500px;height:23px;flex:none}
.i{width:16px;height:16px;display:block;flex:none}
.t.off,.lb.off{color:#9a9a9a}
.c{display:block;flex:none;width:0;height:0;margin:0 0 0 3px;border:3px solid transparent;border-top:3.500px solid #222;border-bottom:0}
.c.off{border-top-color:#aaa}
.c.tight{margin:0}
.c.r2{margin-right:2px}
.c.r3{margin-right:3px}
.sep{display:block;flex:none;width:1px;height:20px;background:#c8c8c8;margin:0 3px}
.sep.n{margin-right:1px}
.sep.z{margin-left:0}
.sep.wide{margin-left:4px}
.grip{display:block;flex:none;width:2px;height:18px;margin-left:5px;background:repeating-linear-gradient(#a8a8a8 0 2px,transparent 2px 4px)}

.row1{height:31px;flex:none;padding:0 0 3px 1.500px;background:linear-gradient(#f2f2f2,#f4f4f4)}
.row1 .more{margin-top:3px}
.m1{margin-left:19px}
.m2{margin-left:36px}
.m3{margin-left:2px}
.m4{margin-left:4px}
.sigma{font:700 15px/16px "Liberation Serif",serif;text-align:center;color:#222}

.popup{position:absolute;left:1311px;top:54px;width:52px;height:50px;z-index:5;background:#fff}
.pophead{height:26px;display:flex;align-items:center;padding-left:3px;color:#b0b0b0;font-size:12px}
.popx{width:19px;height:20px;background:#e2e2e2;margin-left:3px}
.popbtn{display:block;width:52px;height:23px;padding:0;font:12px/16px "Noto Sans CJK SC",sans-serif;color:#222;background:#f0f0f0;border:1px solid;border-color:#fff #555 #555 #fff;box-shadow:inset -1px -1px #a0a0a0}

.ime{position:absolute;left:963px;top:0;width:210px;height:30px;z-index:6}
.sogou{position:absolute;left:0;top:-2px;width:30px;height:30px}
.sogou-s{font:700 21px "Liberation Sans",sans-serif;fill:#fff}
.imebar{position:absolute;left:27px;top:3px;width:179px;height:24px;background:#fff;border:1px solid #b9cfe0;display:flex;align-items:center;gap:5px;padding-left:6px}
.imebar svg{width:16px;height:16px;flex:none}
.imezh{color:#1f7ed0;font-weight:700;font-size:15px}
.imegap{width:26px;flex:none}
.score{position:absolute;left:135px;top:-29px;width:46px;height:46px;border-radius:50%;background:#36b34a;border:2px solid #e8f5e8;color:#fff;font:700 13px/16px "Liberation Sans",sans-serif;text-align:center;padding-top:27px}

.main{flex:1;display:flex;min-height:0}
.side{width:170px;flex:none;display:flex;flex-direction:column;overflow:hidden}
.dockhead{height:16px;background:#0a50d8;color:#fff;display:flex;align-items:center;font-size:13px;letter-spacing:.6px;gap:10px;width:166px;flex:none}
.dockhead span{flex:1}
.dockhead svg{width:12px;height:12px;flex:none}
.dockhead svg:last-child{margin-right:1px}
.sbtn{width:164px;margin-left:1px;height:22px;line-height:21px;text-align:center;background:#f0f0f0;border:1px solid;border-color:#fff #a0a0a0 #a0a0a0 #fff;font-size:13px;flex:none}
.sbtn.act{border-color:#fff #808080 #808080 #fff;border-bottom-width:2px;border-right-width:2px}
.sbtn.bot{border-color:#fff #c0c0c0 #c0c0c0 #fff}
.treetools{height:25px;flex:none;display:flex;align-items:center;gap:6px;padding-left:7px}
.treetools svg{width:16px;height:12px}
.tree{flex:none;height:491px;width:162px;margin-left:2px;background:#fff;border:1px solid #a0a0a0;border-width:2px 2px 2px 1px;padding-top:3px;overflow:hidden;white-space:nowrap}
.row{height:16px;display:flex;align-items:center;padding-left:5px}
.chev{display:block;flex:none;width:5px;height:9px;margin-left:2px}
.chev::before{content:"";display:block;width:6px;height:6px;margin-top:1px;border:solid #aaa;border-width:2px 2px 0 0;transform:rotate(45deg)}
.chev.open::before{border-color:#444;transform:translate(1px,-1px) rotate(135deg)}
.dash{display:block;flex:none;width:7px;margin-left:4px;border-top:1px dotted #888;text-decoration:none}
.fold{width:16px;height:14px;flex:none;margin-right:5px}
.kid{height:16px;display:flex;align-items:center;margin-left:31px;border-left:1px dotted #777}
.kid::before{content:"";flex:none;width:10px;height:8px;align-self:flex-start;border-bottom:1px dotted #777}
.kid.last{border-left:0;padding-left:1px}
.kid.last::before{border-left:1px dotted #777;margin-left:-1px;width:11px}
.ki{width:15px;height:15px;flex:none;margin:0 4px 0 1px;overflow:visible}
.lat{font:11px/12px "Liberation Mono",monospace;letter-spacing:-.6px}
.hl{display:flex;align-items:center;height:16px;background:#d9d9d9;padding-right:1px;flex:none}
.bk{width:15px;height:15px;flex:none;margin-left:2px}
.cadbk{margin-left:7px}
.nw{font:700 9px/9px "Liberation Sans",sans-serif;font-style:normal;color:#3a3000;background:#ffe94a;align-self:flex-start;padding:0 1px;margin-top:-1px;flex:none}

.work{flex:1;min-width:0;display:flex;flex-direction:column}
.row2{height:26px;flex:none}
.row3{height:29px;flex:none;padding-bottom:2px}
.row4{height:29px;flex:none;padding-bottom:2px}
.bar{display:flex;align-items:center;height:27px;background:#f5f5f5}
.bar.second{margin-left:78px;padding-right:1.500px}
.bar.second .grip{margin-left:1px;margin-right:1.500px}
.combo{display:flex;align-items:center;justify-content:space-between;height:23px;background:#fafafa;padding:0 4px;flex:none}
.w1{width:60px}
.w2{width:72px}
.w3{width:64px;background:transparent}
.ls{margin-right:2px}
.t.on{background:#cfe5f8;box-shadow:inset 0 0 0 1px #4b93cc}
.blank{width:45px;height:23px;background:#fafafa;margin-left:2.500px;flex:none}
.endbar{display:flex;align-items:center;height:27px;width:32px;margin-left:3px;background:#f5f5f5}

.canvas{position:relative;height:507px;flex:none;background:#000;overflow:hidden}
.cad{display:block;width:1195px;height:507px;overflow:hidden}
.cad .yel{fill:#fff200}
.cad .wht{fill:#efefef}
.cad .gry{fill:#aaa}
.cad .dark{stroke:#860000;fill:none;stroke-width:1}
.cad .diag{stroke:#7c0000;fill:none;stroke-width:1.100}
.cad .red{stroke:#c80000;fill:none;stroke-width:1}
.cad .wline{stroke:#cfcfcf;fill:none;stroke-width:1}
.cad .grn{stroke:#0c6f0c;fill:none;stroke-width:1}
.cad .rings circle{fill:none;stroke:#157015;stroke-dasharray:4 .4}
.cad .lbl text{font:15px "Liberation Sans",sans-serif;fill:#dcdcdc;text-anchor:middle}
.cad .lbl .dim{fill:#9a9aa8}
.cad .lbl .ink{fill:#555}
.cad .dimtxt text{font:15px "Liberation Sans",sans-serif;fill:#d6d6d6;text-anchor:middle}
.cad .axy{stroke:#00e020;stroke-width:4;fill:none}
.cad .axyh{fill:#00e020}
.cad .axx{stroke:#f00000;stroke-width:4;fill:none}
.cad .axxh{fill:#f00000}
.dimin{position:absolute;left:220px;top:108px;width:64px;height:17px;background:#fff;border:1px solid #666;padding:1px 0 0 1px;font:10.500px/13px "Liberation Mono",monospace}
.dimin span{display:inline-block;background:#0a70d8;color:#fff;padding:0 1px}

.status{flex:none;height:21px;align-items:flex-start;padding-top:2px}
.status .grip{height:18px;margin-top:3px}
.status .sep{margin-top:3px}
.status .t.on{height:26px;margin-top:1px}
.status .lb{line-height:23px}
.s1{margin-left:1px}
.g7{margin-left:7px;margin-right:1px}
.g5{margin-left:5px;margin-right:1px}
.lb{flex:none;white-space:nowrap}
.sep.n+.lb{margin-left:2px}
.un{margin-left:1px}
.yl{margin:0 2px 0 5px}
.num{display:flex;align-items:center;justify-content:flex-end;flex:none;width:58px;height:22px;margin:2px 0 0 4px;background:#fff;border:1px solid #a8a8a8;color:#666;padding-right:19px;position:relative}
.num.wide{width:68px;margin-left:5px}
.spin{position:absolute;right:4px;top:4px;width:0;height:0;border:3px solid transparent;border-bottom:4px solid #333;border-top:0}
.check{display:block;flex:none;width:11px;height:11px;border:1px solid #aaa;background:#fff;margin:6px 9px 0 2px}
.rot{color:#222}
.deg{margin-left:3px}
```
